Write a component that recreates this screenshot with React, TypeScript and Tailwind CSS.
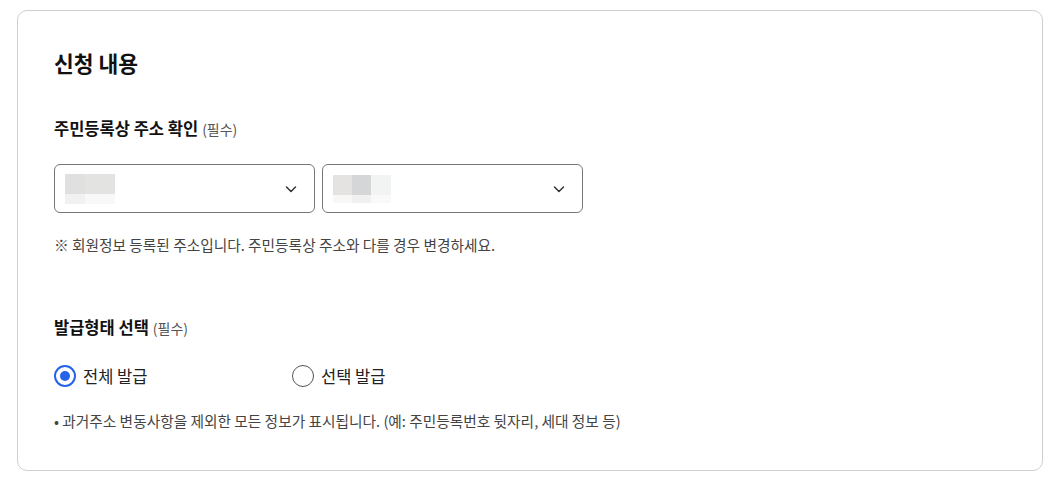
import React, { useState } from 'react'

const font = { fontFamily: '"Noto Sans CJK KR", "Noto Sans", sans-serif' }

const Chevron = () => (
  <svg width="14" height="14" viewBox="0 0 14 14" fill="none" className="text-[#333]">
    <path d="M2.5 5l4.5 4.5L11.5 5" stroke="currentColor" strokeWidth="1.5" strokeLinecap="round" strokeLinejoin="round" />
  </svg>
)

// blurred placeholder standing in for the masked address text
const Blur = ({ cells }: { cells: string[][] }) => (
  <div className="flex flex-col">
    {cells.map((row, i) => (
      <div key={i} className="flex">
        {row.map((c, j) => (
          <div key={j} className={c} />
        ))}
      </div>
    ))}
  </div>
)

const Select = ({ cells }: { cells: string[][] }) => (
  <button className="flex h-[49px] w-[261px] items-center justify-between rounded-[6px] border border-[#767676] bg-white pl-[10px] pr-[16px]">
    <Blur cells={cells} />
    <Chevron />
  </button>
)

const Radio = ({ checked, label, onClick }: { checked: boolean; label: string; onClick: () => void }) => (
  <label className="flex h-[24px] cursor-pointer items-center gap-[7px]" onClick={onClick}>
    <span
      className={
        checked
          ? 'flex h-[22px] w-[22px] items-center justify-center rounded-full border-2 border-[#2563eb] bg-white'
          : 'flex h-[22px] w-[22px] items-center justify-center rounded-full border border-[#555] bg-white'
      }
    >
      {checked && <span className="h-[10px] w-[10px] rounded-full bg-[#2563eb]" />}
    </span>
    <span className="text-[16.5px] leading-[24px] text-[#222]">{label}</span>
  </label>
)

export default function App() {
  const [type, setType] = useState('all')

  return (
    <div className="min-h-screen bg-white pl-[17px] pr-[15px] pt-[10px]" style={font}>
      <div className="rounded-[10px] border border-[#cfcfcf] px-[36px] pb-[38px] pt-[37px]">
        <h2 className="text-[21.5px] font-bold leading-[30px] text-[#111]">신청 내용</h2>

        <div className="mt-[39px] flex h-[22px] items-baseline gap-[4px]">
          <span className="text-[16.5px] font-bold leading-[22px] text-[#111]">주민등록상 주소 확인</span>
          <span className="text-[14px] leading-[22px] text-[#555]">(필수)</span>
        </div>

        <div className="mt-[25px] flex gap-[7px]">
          <Select
            cells={[
              ['h-[20px] w-[20px] bg-[#e0e0e0]', 'h-[20px] w-[30px] bg-[#e3e3e2]'],
              ['h-[10px] w-[20px] bg-[#f1f1f1]', 'h-[10px] w-[30px] bg-[#f8f8f8]'],
            ]}
          />
          <Select
            cells={[
              ['h-[20px] w-[19px] bg-[#e4e3e1]', 'h-[20px] w-[19px] bg-[#d5d6d8]', 'h-[20px] w-[20px] bg-[#f2f3f3]'],
              ['h-[8px] w-[19px] bg-[#f8f7f5]', 'h-[8px] w-[19px] bg-[#f0f0f0]', 'h-[8px] w-[20px] bg-[#f9f9f9]'],
            ]}
          />
        </div>

        <p className="mt-[21px] text-[14.7px] leading-[22px] text-[#444]">※ 회원정보 등록된 주소입니다. 주민등록상 주소와 다를 경우 변경하세요.</p>

        <div className="mt-[60px] flex h-[22px] items-baseline gap-[4px]">
          <span className="text-[16.5px] font-bold leading-[22px] text-[#111]">발급형태 선택</span>
          <span className="text-[14px] leading-[22px] text-[#555]">(필수)</span>
        </div>

        <div className="mt-[26px] flex">
          <div className="w-[238px]">
            <Radio checked={type === 'all'} label="전체 발급" onClick={() => setType('all')} />
          </div>
          <Radio checked={type === 'select'} label="선택 발급" onClick={() => setType('select')} />
        </div>

        <p className="mt-[22px] text-[14.7px] leading-[22px] text-[#444]">• 과거주소 변동사항을 제외한 모든 정보가 표시됩니다. (예: 주민등록번호 뒷자리, 세대 정보 등)</p>
      </div>
    </div>
  )
}
